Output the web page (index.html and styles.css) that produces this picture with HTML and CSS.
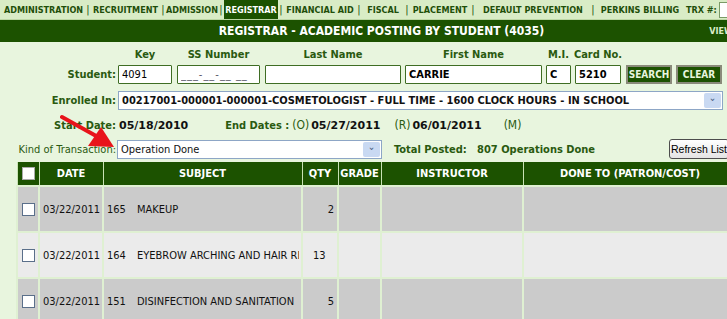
FILE: index.html
```html
<!DOCTYPE html>
<html lang="en">
<head>
    <meta charset="UTF-8">
    <title>Registrar - Academic Posting by Student</title>
    <link rel="stylesheet" href="styles.css">
</head>
<body>
    <div class="page">
        <div class="tabs">
            <span class="tab" style="width:83px">ADMINISTRATION</span><span class="sep">|</span>
            <span class="tab" style="width:69px">RECRUITMENT</span><span class="sep">|</span>
            <span class="tab" style="width:52px">ADMISSION</span><span class="sep">|</span>
            <span class="tab active" style="width:54px">REGISTRAR</span><span class="sep">|</span>
            <span class="tab" style="width:72px">FINANCIAL AID</span><span class="sep">|</span>
            <span class="tab" style="width:42px">FISCAL</span><span class="sep">|</span>
            <span class="tab" style="width:60px">PLACEMENT</span><span class="sep">|</span>
            <span class="tab" style="width:114px">DEFAULT PREVENTION</span><span class="sep">|</span>
            <span class="tab" style="width:88px">PERKINS BILLING</span>
            <span class="trx">TRX #:</span><input class="trx-input" type="text">
        </div>

        <div class="titlebar">
            <h1>REGISTRAR - ACADEMIC POSTING BY STUDENT (4035)</h1>
            <span class="view">VIEW</span>
        </div>

        <div class="form">
            <div class="row student-row">
                <div class="lbl-col"><span class="lbl">Student:</span></div>
                <div class="field f-key"><span class="cap">Key</span><input type="text" value="4091"></div>
                <div class="field f-ss"><span class="cap">SS Number</span><input type="text" value="___-__-__ __" class="ss"></div>
                <div class="field f-last"><span class="cap">Last Name</span><input type="text" value=""></div>
                <div class="field f-first"><span class="cap">First Name</span><input type="text" value="CARRIE" class="bold"></div>
                <div class="field f-mi"><span class="cap">M.I.</span><input type="text" value="C" class="bold"></div>
                <div class="field f-card"><span class="cap">Card No.</span><input type="text" value="5210" class="bold"></div>
                <button class="btn">SEARCH</button>
                <button class="btn">CLEAR</button>
            </div>

            <div class="row enroll-row">
                <div class="lbl-col"><span class="lbl">Enrolled In:</span></div>
                <div class="select wide">
                    <span class="sel-text bold">00217001-000001-000001-COSMETOLOGIST - FULL TIME - 1600 CLOCK HOURS - IN SCHOOL</span>
                    <span class="sel-arrow">&#8964;</span>
                </div>
            </div>

            <div class="row dates-row">
                <div class="lbl-col"><span class="lbl">Start Date:</span></div>
                <span class="val">05/18/2010</span>
                <span class="lbl end-lbl">End Dates : </span><span class="code">(O)</span>
                <span class="val">05/27/2011</span>
                <span class="code r-code">(R)</span><span class="val">06/01/2011</span>
                <span class="code m-code">(M)</span>
            </div>

            <div class="row kind-row">
                <div class="lbl-col"><span class="plain">Kind of Transaction:</span></div>
                <div class="select kind">
                    <span class="sel-text">Operation Done</span>
                    <span class="sel-arrow">&#8964;</span>
                </div>
                <span class="lbl total">Total Posted: &nbsp; 807 Operations Done</span>
                <button class="refresh">Refresh List</button>
            </div>
        </div>

        <table class="grid">
            <colgroup>
                <col style="width:22px"><col style="width:64px"><col style="width:199px">
                <col style="width:36px"><col style="width:43px"><col style="width:142px"><col>
            </colgroup>
            <thead>
                <tr>
                    <th><span class="box white"></span></th>
                    <th>DATE</th><th>SUBJECT</th><th>QTY</th><th>GRADE</th><th>INSTRUCTOR</th><th>DONE TO (PATRON/COST)</th>
                </tr>
            </thead>
            <tbody>
                <tr class="dark">
                    <td><span class="box"></span></td><td>03/22/2011</td>
                    <td><span class="num">165</span>MAKEUP</td><td class="qty">2</td><td></td><td></td><td></td>
                </tr>
                <tr class="light">
                    <td><span class="box"></span></td><td>03/22/2011</td>
                    <td><div class="clip"><span class="num">164</span>EYEBROW ARCHING AND HAIR RE</div></td><td class="qty left">13</td><td></td><td></td><td></td>
                </tr>
                <tr class="dark">
                    <td><span class="box"></span></td><td>03/22/2011</td>
                    <td><span class="num">151</span>DISINFECTION AND SANITATION</td><td class="qty">5</td><td></td><td></td><td></td>
                </tr>
            </tbody>
        </table>

        <svg class="arrow" width="60" height="40" viewBox="0 0 60 40">
            <line x1="2" y1="3" x2="38" y2="23" stroke="#e8141b" stroke-width="4" stroke-linecap="round"/>
            <polygon points="54,33 28,32 41,13" fill="#e8141b"/>
        </svg>
    </div>
</body>
</html>
```

FILE: styles.css
```css
body {
    margin: 0;
    font-family: "DejaVu Sans Condensed", "DejaVu Sans", sans-serif;
    font-size: 11px;
    background: #e8f5de;
    color: #111;
    overflow: hidden;
}

.page {
    position: relative;
    width: 727px;
    height: 319px;
    overflow: hidden;
}

/* top tabs */
.tabs {
    display: flex;
    align-items: center;
    height: 19px;
    background: #d9ecc6;
    border-bottom: 1px solid #bcd6a4;
    padding-left: 2px;
    white-space: nowrap;
    font-size: 9px;
    font-weight: bold;
    color: #1f4f0a;
}

.tab {
    display: flex;
    align-items: center;
    justify-content: center;
    height: 19px;
    flex: none;
}

.tab.active {
    background: #1c5200;
    color: #fff;
}

.sep {
    width: 6px;
    text-align: center;
    font-weight: normal;
    font-size: 11px;
    color: #2a5a14;
    flex: none;
}

.trx {
    margin-left: 2px;
}

.trx-input {
    width: 30px;
    height: 14px;
    border: 1px solid #7a9a66;
    padding: 0;
    margin-left: 2px;
}

/* title */
.titlebar {
    display: flex;
    align-items: center;
    height: 22px;
    background: #1c5200;
    color: #fff;
    position: relative;
}

.titlebar h1 {
    flex: 1;
    margin: 0;
    text-align: center;
    padding-left: 36px;
    font-size: 12px;
    font-weight: bold;
}

.view {
    position: absolute;
    right: -6px;
    top: 6px;
    font-size: 9px;
    font-weight: bold;
    color: #dcefc8;
}

/* form */
.form {
    padding-top: 6px;
}

.row {
    display: flex;
    align-items: flex-end;
}

.lbl-col {
    width: 116px;
    flex: none;
    text-align: right;
    padding-right: 1px;
}

.lbl {
    font-weight: bold;
    color: #2a5a10;
}

.plain {
    color: #2a5a10;
}

.bold {
    font-weight: bold;
}

.student-row .lbl-col {
    padding-bottom: 3px;
}

.field {
    display: flex;
    flex-direction: column;
    align-items: center;
    margin-right: 4px;
    flex: none;
}

.cap {
    font-weight: bold;
    color: #2a5a10;
    height: 17px;
    white-space: nowrap;
}

.field input {
    box-sizing: border-box;
    height: 19px;
    border: 1px solid #3f6d24;
    border-radius: 1px;
    background: #fff;
    font-family: inherit;
    font-size: 11px;
    padding: 0 3px;
    width: 100%;
}

.field input.ss {
    color: #556;
    letter-spacing: 1px;
}

.f-key { width: 54px; margin-left: 1px; margin-right: 5px; }
.f-ss { width: 83px; margin-right: 5px; }
.f-last { width: 136px; }
.f-first { width: 137px; }
.f-mi { width: 25px; }
.f-card { width: 46px; margin-right: 5px; }

.btn {
    box-sizing: border-box;
    height: 19px;
    width: 46px;
    margin-right: 4px;
    background: #1c5200;
    color: #e8f5de;
    border: 2px solid #8a8a7a;
    font-family: inherit;
    font-size: 10px;
    font-weight: bold;
    padding: 0;
}

.enroll-row {
    margin-top: 7px;
    align-items: center;
}

.select {
    box-sizing: border-box;
    display: flex;
    align-items: center;
    height: 19px;
    background: #fff;
    border: 1px solid #8da6c6;
    margin-left: 1px;
    padding-left: 3px;
}

.select.wide {
    width: 605px;
}

.select.kind {
    width: 265px;
    margin-left: 0;
}

.sel-text {
    flex: 1;
    white-space: nowrap;
    overflow: hidden;
}

.sel-arrow {
    width: 17px;
    height: 15px;
    margin-right: 1px;
    background: #c9d9f2;
    color: #4d6185;
    font-size: 10px;
    line-height: 9px;
    text-align: center;
    border-radius: 2px;
}

.dates-row {
    margin-top: 7px;
    height: 16px;
    align-items: center;
}

.val {
    font-family: "DejaVu Sans", sans-serif;
    font-weight: bold;
    margin-left: 2px;
}

.end-lbl {
    margin-left: 37px;
}

.code {
    color: #2a5a10;
    margin-left: 3px;
    font-size: 12px;
}

.r-code { margin-left: 14px; }
.m-code { margin-left: 22px; }

.kind-row {
    margin-top: 6px;
    align-items: center;
}

.total {
    margin-left: 12px;
    flex: 1;
}

.refresh {
    box-sizing: border-box;
    height: 20px;
    width: 60px;
    margin-right: -2px;
    font-family: "Liberation Sans", Arial, sans-serif;
    font-size: 10.5px;
    background: linear-gradient(#ffffff, #e4e4e4);
    border: 1px solid #4d4d4d;
    border-radius: 3px;
    padding: 0 1px;
    white-space: nowrap;
    text-align: center;
}

/* grid */
.grid {
    margin-top: 3px;
    margin-left: 16px;
    width: 722px;
    border-collapse: collapse;
    table-layout: fixed;
}

.grid th {
    height: 23px;
    background: #1c5200;
    color: #fff;
    font-weight: bold;
    font-size: 11px;
    border: 1px solid #c8e2b4;
    border-top: none;
    padding: 0;
}

.grid td {
    height: 44px;
    border: 2px solid #dff0d2;
    padding: 0 3px;
    white-space: nowrap;
}

.grid td:first-child,
.grid th:first-child {
    text-align: center;
}

.grid tr.dark td { background: #cbcbcb; }
.grid tr.light td { background: #ebebeb; }

.clip {
    overflow: hidden;
    width: 192px;
}

.num {
    display: inline-block;
    width: 30px;
}

.qty {
    text-align: right;
}

.qty.left {
    text-align: left;
    padding-left: 10px;
}

.box {
    display: inline-block;
    width: 11px;
    height: 11px;
    background: #fff;
    border: 1px solid #5a6f8a;
    vertical-align: middle;
}

.box.white {
    border-color: #aaa;
}

.arrow {
    position: absolute;
    left: 60px;
    top: 114px;
}
```
